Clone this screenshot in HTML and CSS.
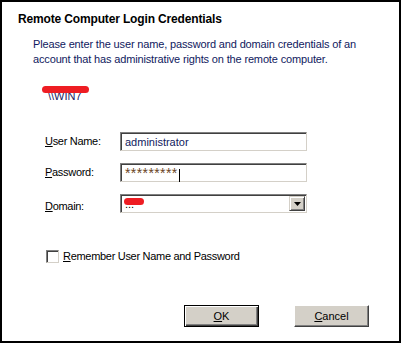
FILE: index.html
```html
<!DOCTYPE HTML>
<html>
<head>
  <meta charset="utf-8">
  <title>Remote Computer Login Credentials</title>
  <link rel="stylesheet" href="styles.css">
</head>
<body>
  <div class="dialog">
    <h1 class="title">Remote Computer Login Credentials</h1>
    <p class="intro">Please enter the user name, password and domain credentials of an account that has administrative rights on the remote computer.</p>

    <div class="computer">
      <span class="computer-name">\\WIN7</span>
      <span class="scribble"></span>
    </div>

    <div class="fields">
      <label class="field-label" for="user"><u>U</u>ser Name:</label>
      <div class="textbox" id="user">administrator</div>

      <label class="field-label" for="pass"><u>P</u>assword:</label>
      <div class="textbox textbox--password" id="pass">*********<span class="caret"></span></div>

      <label class="field-label field-label--domain" for="domain"><u>D</u>omain:</label>
      <div class="combo" id="domain">
        <span class="combo-value">...<span class="scribble scribble--small"></span></span>
        <span class="combo-button">
          <svg width="7" height="4" viewBox="0 0 7 4"><path d="M0 0h7L3.5 4z" fill="#000"/></svg>
        </span>
      </div>
    </div>

    <div class="remember">
      <span class="checkbox"></span>
      <span class="remember-label"><u>R</u>emember User Name and Password</span>
    </div>

    <div class="buttons">
      <a class="button button--default" href="#"><u>O</u>K</a>
      <a class="button" href="#"><u>C</u>ancel</a>
    </div>
  </div>
</body>
</html>
```

FILE: styles.css
```css
body {
  margin: 0;
  background-color: white;
  color: black;
  font-family: "Liberation Sans", Arial, sans-serif;
  font-size: 11px;
}

h1, p {
  margin: 0;
}

u {
  text-decoration: underline;
  text-underline-offset: 1px;
}

.dialog {
  box-sizing: border-box;
  width: 401px;
  height: 343px;
  border: 2px solid black;
  padding: 10px 0 0 0;
}

.title {
  margin-left: 16px;
  font-size: 12px;
  font-weight: bold;
  line-height: 14px;
  letter-spacing: -0.15px;
}

.intro {
  margin: 11px 0 0 31px;
  width: 340px;
  color: #10195e;
  line-height: 15px;
  letter-spacing: -0.15px;
}

.computer {
  position: relative;
  margin: 18px 0 0 40px;
  width: 48px;
  height: 14px;
  line-height: 14px;
}

.computer-name {
  display: block;
  padding-top: 4px;
  padding-left: 6px;
  color: #1b2060;
}

.scribble {
  position: absolute;
  left: 0;
  top: 1px;
  width: 47px;
  height: 7px;
  border-radius: 4px;
  background-color: #ee1d23;
}

.fields {
  display: grid;
  grid-template-columns: 75px 187px;
  grid-auto-rows: 19px;
  row-gap: 12px;
  align-items: center;
  margin: 33px 0 0 43px;
}

.field-label {
  line-height: 13px;
  letter-spacing: -0.3px;
}

.field-label--domain {
  align-self: end;
  margin-bottom: 0;
}

.textbox,
.combo {
  position: relative;
  box-sizing: border-box;
  height: 19px;
  border-top: 1px solid #808080;
  border-left: 1px solid #808080;
  border-right: 1px solid #d4d0c8;
  border-bottom: 1px solid #d4d0c8;
  box-shadow: inset 1px 1px 0 #404040;
  background-color: white;
  padding: 2px 4px;
  line-height: 14px;
  color: #10195e;
}

.textbox--password {
  padding-top: 3px;
  color: #6a4424;
  font-size: 14px;
  line-height: 13px;
  letter-spacing: 0.4px;
}

.caret {
  display: inline-block;
  width: 1px;
  height: 13px;
  margin-left: 1px;
  vertical-align: -4px;
  background-color: black;
}

.combo {
  display: flex;
  align-items: center;
  padding: 0 1px 0 2px;
}

.combo-value {
  position: relative;
  flex: 1;
  padding-left: 2px;
  line-height: 12px;
  color: black;
}

.scribble--small {
  left: 1px;
  top: 0;
  width: 20px;
  height: 7px;
}

.combo-button {
  display: flex;
  align-items: center;
  justify-content: center;
  box-sizing: border-box;
  width: 16px;
  height: 15px;
  border-top: 1px solid #d4d0c8;
  border-left: 1px solid #d4d0c8;
  border-right: 1px solid #404040;
  border-bottom: 1px solid #404040;
  box-shadow: inset 1px 1px 0 white, inset -1px -1px 0 #808080;
  background-color: #d4d0c8;
}

.remember {
  display: flex;
  align-items: center;
  gap: 4px;
  margin: 37px 0 0 44px;
  line-height: 13px;
}

.remember-label {
  letter-spacing: -0.3px;
}

.checkbox {
  box-sizing: border-box;
  width: 13px;
  height: 13px;
  border-top: 1px solid #808080;
  border-left: 1px solid #808080;
  border-right: 1px solid #d4d0c8;
  border-bottom: 1px solid #d4d0c8;
  box-shadow: inset 1px 1px 0 #404040;
  background-color: white;
}

.buttons {
  display: flex;
  justify-content: flex-end;
  gap: 35px;
  margin: 42px 30px 0 0;
}

.button {
  box-sizing: border-box;
  width: 75px;
  height: 22px;
  border-top: 1px solid white;
  border-left: 1px solid white;
  border-right: 1px solid #404040;
  border-bottom: 1px solid #404040;
  box-shadow: inset -1px -1px 0 #808080;
  background-color: #d4d0c8;
  color: black;
  text-align: center;
  line-height: 20px;
  text-decoration: none;
}

.button--default {
  border: 1px solid black;
  box-shadow: inset 1px 1px 0 white, inset -1px -1px 0 #404040, inset -2px -2px 0 #808080;
}
```
